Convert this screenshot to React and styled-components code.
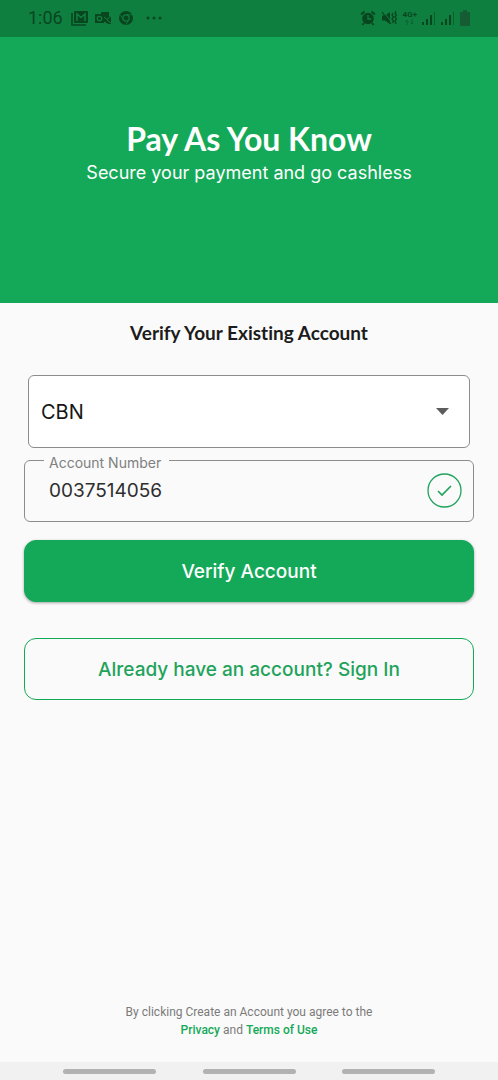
import React, { useState } from "react";
import styled, { createGlobalStyle } from "styled-components";

const GlobalStyle = createGlobalStyle`
  * {
    box-sizing: border-box;
  }
  body {
    margin: 0;
    background: #fafafa;
    font-family: Inter, sans-serif;
  }
`;

const Page = styled.div`
  display: flex;
  flex-direction: column;
  min-height: 100vh;
`;

const StatusBar = styled.div`
  display: flex;
  align-items: center;
  justify-content: space-between;
  height: 37px;
  padding: 0 28px 2px;
  background: #0f7f40;
  color: #07461f;
`;

const StatusGroup = styled.div`
  display: flex;
  align-items: center;
  gap: ${({ $gap }) => $gap}px;
`;

const Clock = styled.span`
  margin-right: 2px;
  font-family: Roboto, sans-serif;
  font-size: 18px;
  line-height: 20px;
`;

const Network = styled.span`
  display: flex;
  flex-direction: column;
  align-items: center;
  font-family: Roboto, sans-serif;
  font-size: 8px;
  font-weight: 700;
  line-height: 8px;
`;

const Header = styled.header`
  display: flex;
  flex-direction: column;
  align-items: center;
  justify-content: center;
  height: 266px;
  padding-bottom: 36px;
  background: #14a958;
  color: #fff;
  text-align: center;
`;

const Title = styled.h1`
  margin: 0 0 2px;
  font-family: Lato, sans-serif;
  font-size: 32px;
  font-weight: 700;
  line-height: 40px;
`;

const Subtitle = styled.p`
  margin: 0;
  font-size: 18px;
  line-height: 24px;
`;

const Form = styled.form`
  display: flex;
  flex-direction: column;
  padding: 20px 24px;
`;

const FormTitle = styled.h2`
  margin: 0 0 32px;
  color: #1c1c1c;
  font-family: Lato, sans-serif;
  font-size: 19px;
  font-weight: 700;
  font-variant-ligatures: none;
  line-height: 20px;
  text-align: center;
`;

const SelectBox = styled.div`
  position: relative;
  margin: 0 4px 12px;
`;

const BankSelect = styled.select`
  display: block;
  width: 100%;
  height: 73px;
  padding: 0 12px;
  appearance: none;
  background: #fff;
  border: 1px solid #8c8c8c;
  border-radius: 6px;
  color: #161616;
  font-family: inherit;
  font-size: 20px;
`;

const Arrow = styled.svg`
  position: absolute;
  top: 33px;
  right: 21px;
  pointer-events: none;
`;

const Field = styled.div`
  position: relative;
  display: flex;
  align-items: center;
  height: 62px;
  margin-bottom: 18px;
  padding: 0 11px 2px 24px;
  border: 1px solid #8c8c8c;
  border-radius: 6px;
`;

const FieldLabel = styled.label`
  position: absolute;
  top: -8px;
  left: 19px;
  padding: 0 8px 0 5px;
  background: #fafafa;
  color: #808080;
  font-size: 14px;
  line-height: 20px;
`;

const FieldInput = styled.input`
  flex: 1;
  min-width: 0;
  height: 40px;
  padding: 0;
  background: none;
  border: none;
  outline: none;
  color: #2e2e2e;
  font-family: inherit;
  font-size: 19px;
`;

const Button = styled.button`
  height: 62px;
  padding: 0 12px;
  border: 1px solid #14a958;
  border-radius: 12px;
  background: ${({ $outlined }) => ($outlined ? "transparent" : "#14a958")};
  box-shadow: ${({ $outlined }) =>
    $outlined ? "none" : "0 1px 3px rgba(0, 0, 0, 0.35)"};
  color: ${({ $outlined }) => ($outlined ? "#1fa35c" : "#fff")};
  font-family: inherit;
  font-size: 19px;
  font-weight: 500;
  cursor: pointer;

  & + & {
    margin-top: 36px;
  }
`;

const Terms = styled.p`
  margin: auto 0 0;
  padding: 0 24px 23px;
  color: #7b7b7b;
  font-family: Roboto, sans-serif;
  font-size: 12px;
  line-height: 18px;
  text-align: center;
`;

const TermsLink = styled.a`
  color: #14a958;
  font-weight: 500;
  text-decoration: none;
`;

const NavBar = styled.div`
  display: flex;
  align-items: center;
  justify-content: space-between;
  height: 18px;
  padding: 0 63px;
  background: #f1f1f1;
`;

const NavPill = styled.span`
  width: 25%;
  height: 5px;
  border-radius: 3px;
  background: #b2b2b2;
`;

const GmailIcon = () => (
  <svg width="18" height="16" viewBox="0 0 18 16" fill="none">
    <path d="M1 3v12h14" stroke="currentColor" strokeWidth="1.6" />
    <rect x="3" y="1" width="14" height="12" rx="1" fill="currentColor" />
    <path d="M6 11V4l4 3.5L14 4v7" stroke="#0f7f40" strokeWidth="1.5" />
  </svg>
);

const OutlookIcon = () => (
  <svg width="17" height="16" viewBox="0 0 17 16" fill="none">
    <path d="M6 2h8v4l2 1v7h-3l-3-2H6z" fill="currentColor" />
    <path d="M9 7l3 2.5L16 6M12 10l4 3" stroke="#0f7f40" />
    <rect x="0" y="4" width="9" height="9" fill="currentColor" />
    <circle cx="4.5" cy="8.5" r="2.2" stroke="#0f7f40" strokeWidth="1.3" />
  </svg>
);

const ChromeIcon = () => (
  <svg width="16" height="16" viewBox="0 0 16 16" fill="none">
    <circle cx="8" cy="8" r="7" fill="currentColor" />
    <circle cx="8" cy="8" r="3.2" stroke="#0f7f40" strokeWidth="1.2" />
    <path
      d="M8 4.8h6M5.2 9.6L2.4 4.8M10.8 9.6L8 14.6"
      stroke="#0f7f40"
      strokeWidth="0.8"
    />
  </svg>
);

const DotsIcon = () => (
  <svg width="28" height="4" viewBox="0 0 28 4" fill="currentColor">
    <circle cx="8" cy="2" r="1.5" />
    <circle cx="14" cy="2" r="1.5" />
    <circle cx="20" cy="2" r="1.5" />
  </svg>
);

const AlarmIcon = () => (
  <svg width="16" height="16" viewBox="0 0 16 16" fill="none">
    <circle cx="8" cy="8.5" r="5.8" fill="currentColor" />
    <path
      d="M1 4.5L4.5 1.5M15 4.5L11.5 1.5M4 13l-1.5 2M12 13l1.5 2"
      stroke="currentColor"
      strokeWidth="2"
    />
    <path d="M8 5v4h3" stroke="#0f7f40" strokeWidth="1.3" />
  </svg>
);

const MuteIcon = () => (
  <svg width="17" height="16" viewBox="0 0 17 16" fill="none">
    <path d="M1 5.5h3L9 2v12l-5-3.5H1z" fill="currentColor" />
    <path d="M2 1l9 12" stroke="#0f7f40" strokeWidth="1" />
    <path d="M1 2l9 12" stroke="currentColor" strokeWidth="1.2" />
    <path
      d="M12 3l-1 2 1.5 2-1.5 2 1.5 2-1 2M15 1l-1 2 1.5 2-1.5 2 1.5 2-1.5 2 1 3"
      stroke="currentColor"
      strokeWidth="1.3"
    />
  </svg>
);

const DataArrows = () => (
  <svg width="9" height="6" viewBox="0 0 9 6" fill="none" opacity="0.5">
    <path
      d="M2 6V1M0.5 2.5L2 1l1.5 1.5M7 0v5M5.5 3.5L7 5l1.5-1.5"
      stroke="currentColor"
    />
  </svg>
);

const SignalIcon = () => (
  <svg width="14" height="14" viewBox="0 0 14 14" fill="currentColor">
    <rect x="0" y="11" width="2" height="3" />
    <rect x="4" y="8" width="2" height="6" />
    <rect x="8" y="4" width="2" height="10" />
    <rect x="12" y="1" width="1" height="13" opacity="0.6" />
  </svg>
);

const BatteryIcon = () => (
  <svg width="10" height="16" viewBox="0 0 10 16" fill="#155c35">
    <path d="M3 0h4v2h2q1 0 1 1v12q0 1-1 1H1q-1 0-1-1V3q0-1 1-1h2z" />
  </svg>
);

const CheckIcon = () => (
  <svg width="35" height="35" viewBox="0 0 35 35" fill="none" stroke="#1fa35c">
    <circle cx="17.5" cy="17.5" r="16.5" strokeWidth="1.3" />
    <path d="M11 18l4 4 9-9" strokeWidth="1.6" />
  </svg>
);

function App() {
  const [bank, setBank] = useState("CBN");
  const [account, setAccount] = useState("0037514056");

  return (
    <Page>
      <GlobalStyle />
      <StatusBar>
        <StatusGroup $gap={6}>
          <Clock>1:06</Clock>
          <GmailIcon />
          <OutlookIcon />
          <ChromeIcon />
          <DotsIcon />
        </StatusGroup>
        <StatusGroup $gap={5}>
          <AlarmIcon />
          <MuteIcon />
          <Network>
            4G+
            <DataArrows />
          </Network>
          <SignalIcon />
          <SignalIcon />
          <BatteryIcon />
        </StatusGroup>
      </StatusBar>

      <Header>
        <Title>Pay As You Know</Title>
        <Subtitle>Secure your payment and go cashless</Subtitle>
      </Header>

      <Form onSubmit={(e) => e.preventDefault()}>
        <FormTitle>Verify Your Existing Account</FormTitle>
        <SelectBox>
          <BankSelect
            aria-label="Bank"
            value={bank}
            onChange={(e) => setBank(e.target.value)}
          >
            <option value="CBN">CBN</option>
          </BankSelect>
          <Arrow width="13" height="7" viewBox="0 0 13 7" fill="#5c5c5c">
            <path d="M0 0h13L6.5 7z" />
          </Arrow>
        </SelectBox>
        <Field>
          <FieldLabel htmlFor="account">Account Number</FieldLabel>
          <FieldInput
            id="account"
            inputMode="numeric"
            value={account}
            onChange={(e) => setAccount(e.target.value)}
          />
          <CheckIcon />
        </Field>
        <Button type="submit">Verify Account</Button>
        <Button type="button" $outlined>
          Already have an account? Sign In
        </Button>
      </Form>

      <Terms>
        By clicking Create an Account you agree to the
        <br />
        <TermsLink href="#privacy">Privacy</TermsLink> and{" "}
        <TermsLink href="#terms">Terms of Use</TermsLink>
      </Terms>
      <NavBar>
        <NavPill />
        <NavPill />
        <NavPill />
      </NavBar>
    </Page>
  );
}

export default App;
